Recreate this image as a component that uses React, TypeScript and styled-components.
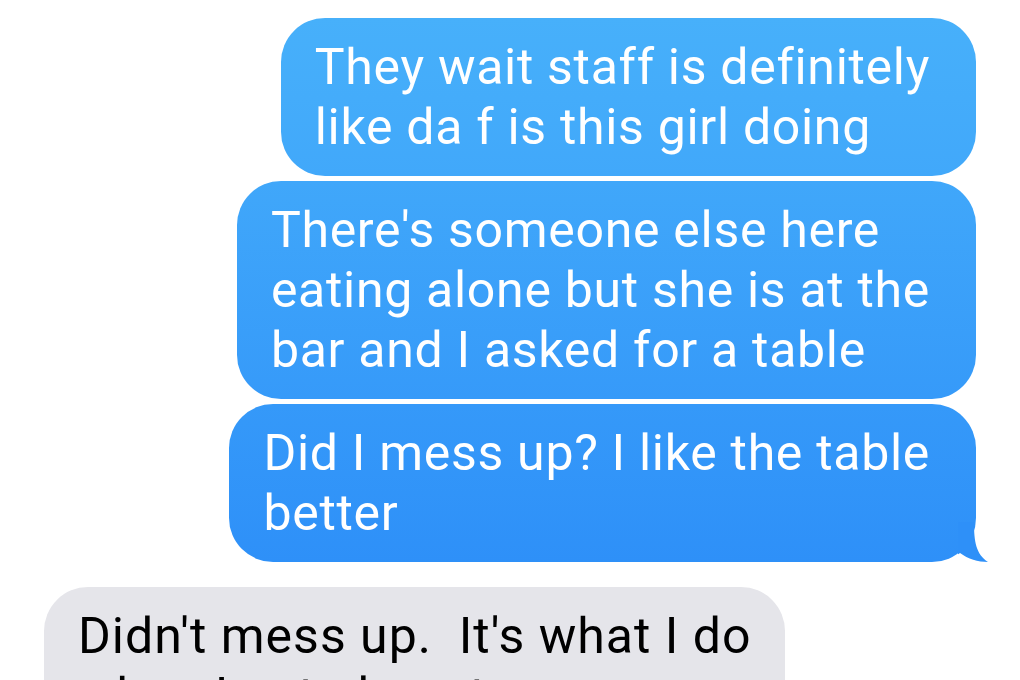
import styled, { createGlobalStyle } from 'styled-components';

const GlobalStyle = createGlobalStyle`
    html, body {
        margin: 0;
        padding: 0;
        background: #ffffff;
    }
    body {
        width: 1020px;
        height: 680px;
        overflow: hidden;
        font-family: Roboto, 'Liberation Sans', sans-serif;
    }
`;

const App = () => {
    return (
        <>
            <GlobalStyle />
            <Thread>
                <Group>
                    <Bubble $from="rgb(71,176,250)" $to="rgb(65,168,250)">
                        <Line>They wait staff is definitely</Line>
                        <Line>like da f is this girl doing</Line>
                    </Bubble>
                    <Bubble $from="rgb(64,167,250)" $to="rgb(54,154,249)">
                        <Line>There's someone else here</Line>
                        <Line>eating alone but she is at the</Line>
                        <Line>bar and I asked for a table</Line>
                    </Bubble>
                    <Bubble $from="rgb(53,153,249)" $to="rgb(46,144,248)">
                        <Line>Did I mess up? I like the table</Line>
                        <Line>better</Line>
                        <Tail viewBox="0 0 34 40" width="34" height="40">
                            <path
                                d="M0 0 L16 0 C16 20 18 32 30 40 C20 40 10 37 2 31 C-4 35 -10 38 -16 40 L0 40 Z"
                                fill="rgb(46,144,248)"
                            />
                        </Tail>
                    </Bubble>
                </Group>
                <Incoming>
                    <Line>Didn't mess up.&nbsp; It's what I do</Line>
                    <Line>when I eat alone too</Line>
                </Incoming>
            </Thread>
        </>
    );
};

const Thread = styled.div`
    display: flex;
    flex-direction: column;
    padding: 18px 44px 0 44px;
    gap: 25px;
`;

const Group = styled.div`
    display: flex;
    flex-direction: column;
    align-items: flex-end;
    gap: 5px;
`;

const Bubble = styled.div<{ $from: string; $to: string }>`
    position: relative;
    padding: 19px 46px 19px 34px;
    border-radius: 44px;
    background: linear-gradient(180deg, ${(p) => p.$from}, ${(p) => p.$to});
    color: #ffffff;
    font-size: 50px;
    line-height: 60px;
    letter-spacing: 0.7px;
`;

const Incoming = styled.div`
    align-self: flex-start;
    padding: 19px 34px;
    border-radius: 44px;
    background: #e5e5ea;
    color: #000000;
    font-size: 50px;
    line-height: 60px;
    letter-spacing: 1px;
`;

const Line = styled.span`
    display: block;
    white-space: nowrap;
`;

const Tail = styled.svg`
    position: absolute;
    right: -16px;
    bottom: 0;
    display: block;
`;

export default App;
